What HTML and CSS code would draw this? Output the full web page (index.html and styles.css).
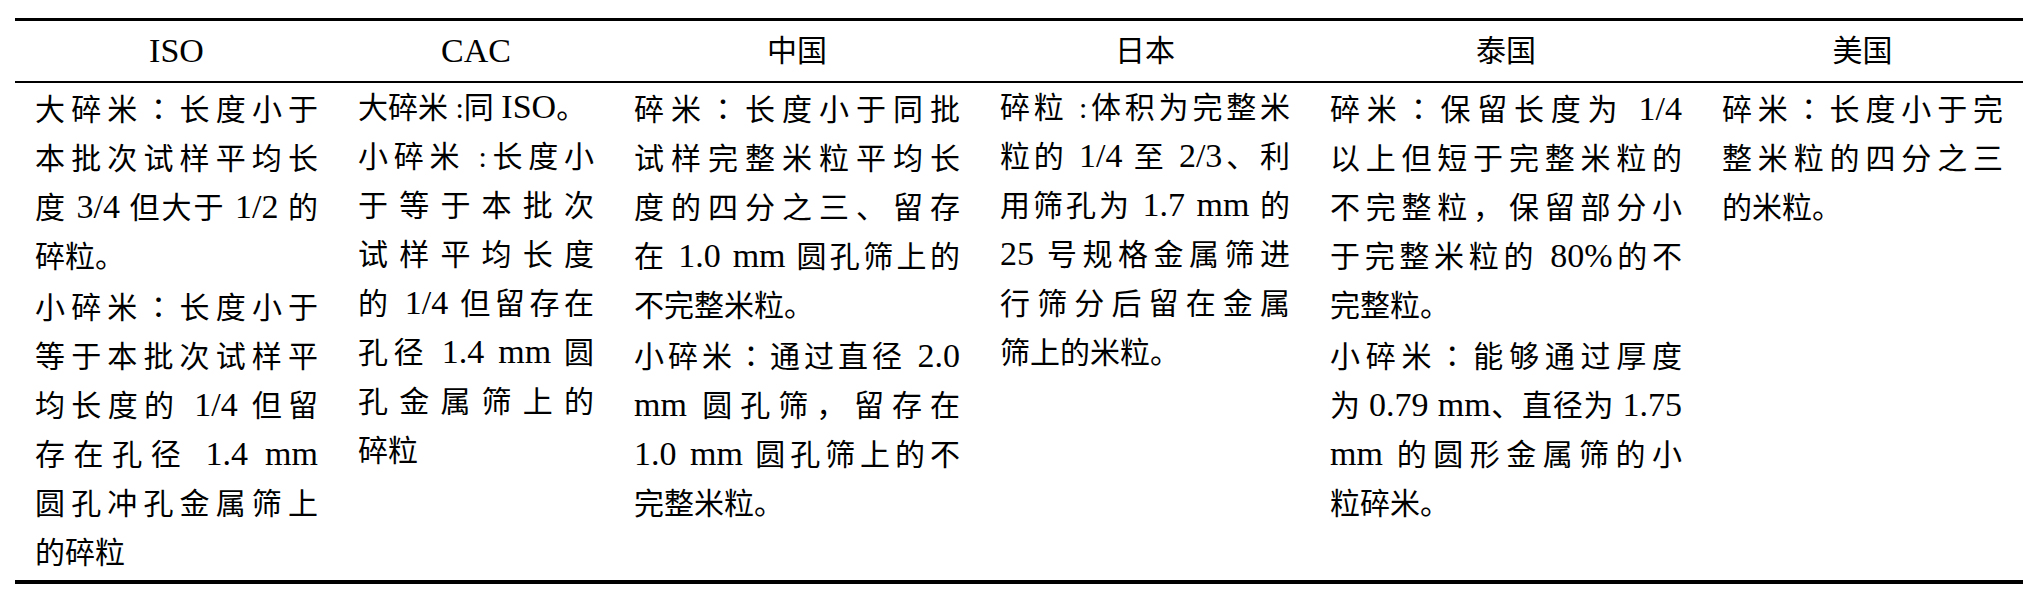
FILE: index.html
```html
<!DOCTYPE html>
<html lang="zh-CN">
<head>
<meta charset="utf-8">
<title>碎米定义比较</title>
<link rel="stylesheet" href="styles.css">
</head>
<body>
<div class="table">
  <div class="th"><span class="en" lang="en">ISO</span></div>
  <div class="th"><span class="en" lang="en">CAC</span></div>
  <div class="th">中国</div>
  <div class="th">日本</div>
  <div class="th">泰国</div>
  <div class="th">美国</div>

  <div class="td">
    <span class="ln">大碎米<span class="col" lang="zh-TW">：</span>长度小于</span>
    <span class="ln">本批次试样平均长</span>
    <span class="ln">度 <span class="en" lang="en">3/4</span> 但大于 <span class="en" lang="en">1/2</span> 的</span>
    <span class="ln end">碎粒。</span>
    <span class="ln">小碎米<span class="col" lang="zh-TW">：</span>长度小于</span>
    <span class="ln">等于本批次试样平</span>
    <span class="ln">均长度的 <span class="en" lang="en">1/4</span> 但留</span>
    <span class="ln">存在孔径 <span class="en" lang="en">1.4 mm</span></span>
    <span class="ln">圆孔冲孔金属筛上</span>
    <span class="ln end">的碎粒</span>
  </div>
  <div class="td">
    <span class="ln end">大碎米 :同 <span class="en" lang="en">ISO</span>。</span>
    <span class="ln">小碎米 :长度小</span>
    <span class="ln">于等于本批次</span>
    <span class="ln">试样平均长度</span>
    <span class="ln">的 <span class="en" lang="en">1/4</span> 但留存在</span>
    <span class="ln">孔径 <span class="en" lang="en">1.4 mm</span> 圆</span>
    <span class="ln">孔金属筛上的</span>
    <span class="ln end">碎粒</span>
  </div>
  <div class="td">
    <span class="ln">碎米<span class="col" lang="zh-TW">：</span>长度小于同批</span>
    <span class="ln">试样完整米粒平均长</span>
    <span class="ln">度的四分之三、留存</span>
    <span class="ln">在 <span class="en" lang="en">1.0 mm</span> 圆孔筛上的</span>
    <span class="ln end">不完整米粒。</span>
    <span class="ln">小碎米<span class="col" lang="zh-TW">：</span>通过直径 <span class="en" lang="en">2.0</span></span>
    <span class="ln"><span class="en" lang="en">mm</span> 圆孔筛，留存在</span>
    <span class="ln"><span class="en" lang="en">1.0 mm</span> 圆孔筛上的不</span>
    <span class="ln end">完整米粒。</span>
  </div>
  <div class="td">
    <span class="ln">碎粒 :体积为完整米</span>
    <span class="ln">粒的 <span class="en" lang="en">1/4</span> 至 <span class="en" lang="en">2/3</span>、利</span>
    <span class="ln">用筛孔为 <span class="en" lang="en">1.7 mm</span> 的</span>
    <span class="ln"><span class="en" lang="en">25</span> 号规格金属筛进</span>
    <span class="ln">行筛分后留在金属</span>
    <span class="ln end">筛上的米粒。</span>
  </div>
  <div class="td">
    <span class="ln">碎米<span class="col" lang="zh-TW">：</span>保留长度为 <span class="en" lang="en">1/4</span></span>
    <span class="ln">以上但短于完整米粒的</span>
    <span class="ln">不完整粒，保留部分小</span>
    <span class="ln">于完整米粒的 <span class="en" lang="en">80%</span>的不</span>
    <span class="ln end">完整粒。</span>
    <span class="ln">小碎米<span class="col" lang="zh-TW">：</span>能够通过厚度</span>
    <span class="ln">为 <span class="en" lang="en">0.79 mm</span>、直径为 <span class="en" lang="en">1.75</span></span>
    <span class="ln"><span class="en" lang="en">mm</span> 的圆形金属筛的小</span>
    <span class="ln end">粒碎米。</span>
  </div>
  <div class="td">
    <span class="ln">碎米<span class="col" lang="zh-TW">：</span>长度小于完</span>
    <span class="ln">整米粒的四分之三</span>
    <span class="ln end">的米粒。</span>
  </div>
</div>
</body>
</html>
```

FILE: styles.css
```css
html, body {
  margin: 0;
  padding: 0;
  background: #fff;
}

body {
  color: #000;
  font-family: "Liberation Serif", "Noto Sans CJK SC", serif;
  font-size: 30px;
}

.table {
  display: grid;
  grid-template-columns: 323px 276px 366px 330px 392px 321px;
  width: 2008px;
  margin: 18px 0 0 15px;
  border-top: 3px solid #000;
  border-bottom: 4px solid #000;
}

.th {
  height: 60px;
  display: flex;
  align-items: center;
  justify-content: center;
  border-bottom: 2px solid #000;
  line-height: 1;
}

.td {
  padding: 0 20px 3px;
  line-height: 49px;
}

.ln {
  display: block;
  white-space: nowrap;
  text-align: justify;
  text-align-last: justify;
}

.ln.end {
  text-align-last: left;
}

.en {
  font-family: "Liberation Serif", serif;
  font-size: 34px;
  line-height: 1;
}

.col {
  font-family: "Noto Sans CJK TC", "Noto Sans CJK SC", sans-serif;
}
```
